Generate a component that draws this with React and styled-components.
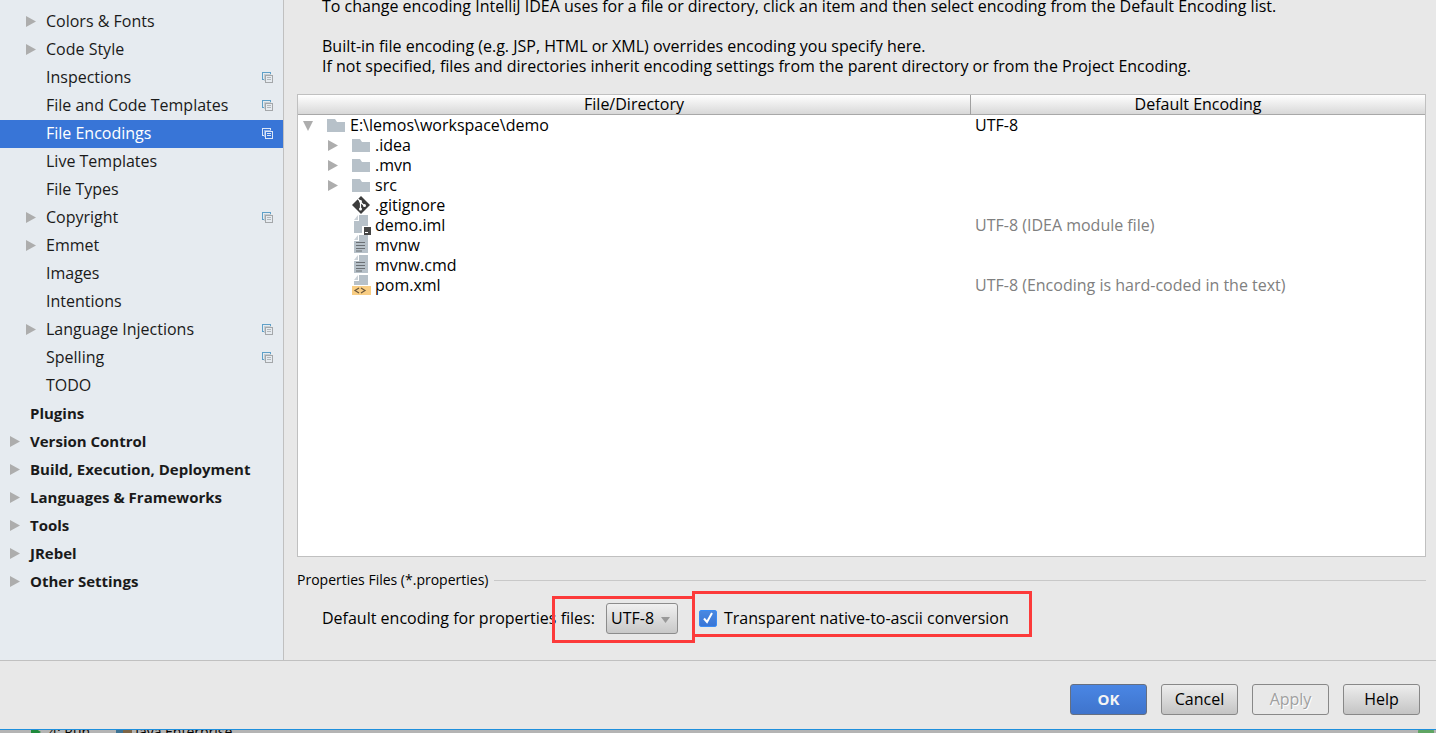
import React, { useState } from 'react';
import styled, { createGlobalStyle, css } from 'styled-components';

const GlobalStyle = createGlobalStyle`
  *, *::before, *::after { box-sizing: border-box; }
  body {
    margin: 0;
    background: #e8e8e8;
    color: #000;
    font-family: "Open Sans", "Noto Sans", sans-serif;
    font-size: 16px;
    line-height: 20px;
  }
`;

const Screen = styled.div`
  display: flex;
  flex-direction: column;
  height: 100vh;
  overflow: hidden;
`;

const Dialog = styled.div`
  display: flex;
  flex-direction: column;
  flex: 1;
  min-height: 0;
`;

const Panes = styled.div`
  display: flex;
  flex: 1;
  min-height: 0;
`;

const Sidebar = styled.nav`
  flex: none;
  width: 284px;
  padding-top: 8px;
  background: #e6ebf0;
  border-right: 1px solid #c0c0c0;
`;

const NavList = styled.ul`
  margin: 0;
  padding: 0;
  list-style: none;
`;

const NavLink = styled.a`
  display: flex;
  align-items: center;
  height: 28px;
  padding: 0 10px 2px;
  padding-left: ${(p) => (p.$top ? 10 : 26)}px;
  color: #1a1a1a;
  font-size: ${(p) => (p.$top ? 15 : 16)}px;
  font-weight: ${(p) => (p.$top ? 700 : 400)};
  text-decoration: none;
  ${(p) => p.$selected && css`
    background: #3875d7;
    color: #fff;
  `}
`;

const NavLabel = styled.span`
  flex: 1;
  white-space: nowrap;
`;

const ArrowSlot = styled.span`
  display: flex;
  flex: none;
  align-items: center;
  width: ${(p) => p.$width}px;
`;

const Content = styled.main`
  display: flex;
  flex: 1;
  flex-direction: column;
  min-width: 0;
  padding: 0 10px 0 13px;
`;

const Intro = styled.div`
  display: flex;
  flex: none;
  flex-direction: column;
  justify-content: flex-end;
  gap: 20px;
  height: 94px;
  padding: 0 0 18px 25px;
`;

const Paragraph = styled.p`
  margin: 0;
  white-space: nowrap;
`;

const TablePane = styled.div`
  flex: 1;
  min-height: 0;
  background: #fff;
  border: 1px solid #c0c0c0;
`;

const FileTable = styled.table`
  width: 100%;
  table-layout: fixed;
  border-spacing: 0;
`;

const HeadCell = styled.th`
  width: ${(p) => p.$width || 'auto'};
  height: 20px;
  padding: 0;
  background: linear-gradient(#fff, #d8d8d8);
  border-bottom: 1px solid #a8a8a8;
  font-weight: 400;
  line-height: 19px;
  & + & { border-left: 1px solid #a0a0a0; }
`;

const Cell = styled.td`
  height: 20px;
  padding: 0 0 0 5px;
  color: ${(p) => (p.$muted ? '#808080' : '#000')};
  white-space: nowrap;
`;

const TreeItem = styled.div`
  display: flex;
  align-items: center;
  height: 20px;
  padding-left: ${(p) => p.$depth * 25}px;
`;

const TreeIcon = styled.span`
  display: flex;
  flex: none;
  width: 23px;
`;

const GroupTitle = styled.h2`
  display: flex;
  align-items: center;
  gap: 6px;
  margin: 13px 0 0;
  font-size: 14px;
  font-weight: 400;
  &::after {
    content: "";
    flex: 1;
    height: 1px;
    background: #c8c8c8;
  }
`;

const Options = styled.div`
  display: flex;
  align-items: center;
  height: 70px;
  padding: 0 0 14px 25px;
`;

const Marked = styled.div`
  position: relative;
  display: flex;
  align-items: center;
  ${(p) => p.$fixed && css`width: 377px; justify-content: space-between;`}
`;

const Marker = styled.span`
  position: absolute;
  top: ${(p) => p.$top}px;
  left: ${(p) => p.$left}px;
  width: ${(p) => p.$width}px;
  height: ${(p) => p.$height}px;
  border: 3px solid #fc3a3a;
  pointer-events: none;
`;

const SelectBox = styled.span`
  position: relative;
  display: flex;
  margin-right: 21px;
  svg {
    position: absolute;
    top: 14px;
    right: 8px;
    pointer-events: none;
  }
`;

const Select = styled.select`
  appearance: none;
  width: 72px;
  height: 31px;
  padding: 0 4px;
  background: linear-gradient(#f0f0f0, #c8c8c8);
  border: 1px solid #8c8c8c;
  border-radius: 3px;
  color: #000;
  font: inherit;
`;

const CheckLabel = styled.label`
  display: flex;
  align-items: center;
  gap: 7px;
  white-space: nowrap;
`;

const Checkbox = styled.input`
  appearance: none;
  width: 18px;
  height: 17px;
  margin: 0;
  background: linear-gradient(#4a88e0, #3875d7);
  border: 1px solid #3b8cf5;
  border-radius: 2px;
  & + svg { margin-left: -25px; pointer-events: none; }
  &:not(:checked) { background: #fff; }
  &:not(:checked) + svg { visibility: hidden; }
`;

const Footer = styled.footer`
  display: flex;
  flex: none;
  justify-content: flex-end;
  gap: 14px;
  padding: 23px 16px 14px;
  border-top: 1px solid #c0c0c0;
`;

const Button = styled.button`
  width: 77px;
  height: 31px;
  padding: 0 0 2px;
  background: linear-gradient(#ededed, #c4c4c4);
  border: 1px solid #888;
  border-radius: 3px;
  color: #000;
  font: inherit;
  ${(p) => p.$primary && css`
    background: linear-gradient(#4a86e4, #3f74cc);
    border-color: #666f80;
    color: #f4f4f4;
    font-size: 15px;
    font-weight: 700;
  `}
  &:disabled {
    background: #e8e8e8;
    color: #a0a0a0;
    text-shadow: 1px 1px #fff;
  }
`;

const ToolStrip = styled.div`
  display: flex;
  flex: none;
  align-items: center;
  gap: 26px;
  height: 4px;
  padding: 0 2px 0 31px;
  overflow: hidden;
  background: #b4b4b4;
  border-top: 1px solid #1e8fdc;
  font-size: 14px;
  line-height: 24px;
`;

const StripItem = styled.span`
  display: flex;
  flex: none;
  align-items: center;
  gap: ${(p) => p.$gap}px;
  &:last-child { margin-left: auto; }
`;

const Arrow = ({ open }) => (
  <svg width="11" height="11" viewBox="0 0 11 11" aria-hidden="true">
    <path d={open ? 'M0 1h10L5 11z' : 'M0 0v11L10 5.5z'} fill="#adadad" />
  </svg>
);

const CopyIcon = ({ selected }) => (
  <svg width="11" height="11" viewBox="0 0 11 11" fill="none" aria-hidden="true" shapeRendering="crispEdges">
    <path d="M2 7.500H.5v-7h8V2" stroke={selected ? '#dce7f7' : '#5fa0c8'} />
    <path d="M2.500 9V2.500H9" stroke={selected ? '#8fb2e9' : '#c2cdd4'} />
    <rect x="3.500" y="3.500" width="7" height="7" stroke={selected ? '#dce7f7' : '#a4a7aa'} />
    <path d="M5 5.500h4M5 7.500h4" stroke={selected ? '#dce7f7' : '#b2b7bb'} />
  </svg>
);

const PageShape = () => (
  <>
    <path d="M7 0h9v18H2V6h5z" fill="#b7c1c9" />
    <path d="M6 0v5H2z" fill="#cbd2d8" />
  </>
);

const icons = {
  folder: <path d="M0 4h8l2 3h8v10H0z" fill="#b7c1c9" />,
  git: (
    <>
      <path d="M9 1l9 9-9 9-9-9z" fill="#3c3c3c" />
      <path d="M6 4l2.500 2.500V14M8.500 7l4 4" stroke="#fff" strokeWidth="1.200" fill="none" />
      <circle cx="8.500" cy="6.500" r="1.400" fill="#fff" />
      <circle cx="8.500" cy="14" r="1.500" fill="#fff" />
      <circle cx="12.500" cy="10.500" r="1.500" fill="#fff" />
    </>
  ),
  module: (
    <>
      <PageShape />
      <path d="M10 11h9v9h-9z" fill="#fff" />
      <path d="M12 12h7v8h-7z" fill="#464646" />
      <path d="M13 17h3v1h-3z" fill="#fff" />
    </>
  ),
  text: (
    <>
      <PageShape />
      <path d="M4 7.500h9M4 10.500h9M4 13.500h9M4 16h6" stroke="#6b7075" strokeWidth="1" />
    </>
  ),
  xml: (
    <>
      <path d="M7 0h9v10H2V6h5z" fill="#b7c1c9" />
      <path d="M6 0v5H2z" fill="#cbd2d8" />
      <path d="M0 11h19v9H0z" fill="#f8cd83" />
      <path d="M7 13l-4 2.500L7 18M9 13l4 2.500-4 2.500" stroke="#6b573b" strokeWidth="1.200" fill="none" />
    </>
  ),
};

const FileIcon = ({ kind }) => (
  <svg width="19" height="20" viewBox="0 0 19 20" aria-hidden="true">{icons[kind]}</svg>
);

const settings = [
  { label: 'Colors & Fonts', arrow: true },
  { label: 'Code Style', arrow: true },
  { label: 'Inspections', copy: true },
  { label: 'File and Code Templates', copy: true },
  { label: 'File Encodings', copy: true, selected: true },
  { label: 'Live Templates' },
  { label: 'File Types' },
  { label: 'Copyright', arrow: true, copy: true },
  { label: 'Emmet', arrow: true },
  { label: 'Images' },
  { label: 'Intentions' },
  { label: 'Language Injections', arrow: true, copy: true },
  { label: 'Spelling', copy: true },
  { label: 'TODO' },
  { label: 'Plugins', top: true },
  { label: 'Version Control', top: true, arrow: true },
  { label: 'Build, Execution, Deployment', top: true, arrow: true },
  { label: 'Languages & Frameworks', top: true, arrow: true },
  { label: 'Tools', top: true, arrow: true },
  { label: 'JRebel', top: true, arrow: true },
  { label: 'Other Settings', top: true, arrow: true },
];

const files = [
  { name: 'E:\\lemos\\workspace\\demo', kind: 'folder', depth: 0, arrow: true, open: true, encoding: 'UTF-8' },
  { name: '.idea', kind: 'folder', depth: 1, arrow: true },
  { name: '.mvn', kind: 'folder', depth: 1, arrow: true },
  { name: 'src', kind: 'folder', depth: 1, arrow: true },
  { name: '.gitignore', kind: 'git', depth: 1 },
  { name: 'demo.iml', kind: 'module', depth: 1, encoding: 'UTF-8 (IDEA module file)', muted: true },
  { name: 'mvnw', kind: 'text', depth: 1 },
  { name: 'mvnw.cmd', kind: 'text', depth: 1 },
  { name: 'pom.xml', kind: 'xml', depth: 1, encoding: 'UTF-8 (Encoding is hard-coded in the text)', muted: true },
];

export default function App() {
  const [transparent, setTransparent] = useState(true);
  return (
    <Screen>
      <GlobalStyle />
      <Dialog role="dialog" aria-label="Settings">
        <Panes>
          <Sidebar>
            <NavList>
              {settings.map((s) => (
                <li key={s.label}>
                  <NavLink href="#" $top={s.top} $selected={s.selected} aria-current={s.selected ? 'page' : undefined}>
                    <ArrowSlot $width={20}>{s.arrow && <Arrow />}</ArrowSlot>
                    <NavLabel>{s.label}</NavLabel>
                    {s.copy && <CopyIcon selected={s.selected} />}
                  </NavLink>
                </li>
              ))}
            </NavList>
          </Sidebar>
          <Content>
            <Intro>
              <Paragraph>
                To change encoding IntelliJ IDEA uses for a file or directory, click an item and then select encoding from the Default Encoding list.
              </Paragraph>
              <Paragraph>
                Built-in file encoding (e.g. JSP, HTML or XML) overrides encoding you specify here.
                <br />
                If not specified, files and directories inherit encoding settings from the parent directory or from the Project Encoding.
              </Paragraph>
            </Intro>
            <TablePane>
              <FileTable>
                <thead>
                  <tr>
                    <HeadCell>File/Directory</HeadCell>
                    <HeadCell $width="455px">Default Encoding</HeadCell>
                  </tr>
                </thead>
                <tbody>
                  {files.map((f) => (
                    <tr key={f.name}>
                      <Cell>
                        <TreeItem $depth={f.depth}>
                          <ArrowSlot $width={24}>{f.arrow && <Arrow open={f.open} />}</ArrowSlot>
                          <TreeIcon><FileIcon kind={f.kind} /></TreeIcon>
                          {f.name}
                        </TreeItem>
                      </Cell>
                      <Cell $muted={f.muted}>{f.encoding}</Cell>
                    </tr>
                  ))}
                </tbody>
              </FileTable>
            </TablePane>
            <GroupTitle>Properties Files (*.properties)</GroupTitle>
            <Options>
              <Marked $fixed>
                <label htmlFor="encoding">Default encoding for properties files:</label>
                <SelectBox>
                  <Select id="encoding" defaultValue="UTF-8">
                    <option>UTF-8</option>
                  </Select>
                  <svg width="9" height="6" viewBox="0 0 9 6" aria-hidden="true">
                    <path d="M0 0h9L4.500 6z" fill="#999" />
                  </svg>
                </SelectBox>
                <Marker $top={-7} $left={230} $width={143} $height={47} />
              </Marked>
              <Marked>
                <CheckLabel>
                  <Checkbox type="checkbox" checked={transparent} onChange={(e) => setTransparent(e.target.checked)} />
                  <svg width="18" height="18" viewBox="0 0 18 18" aria-hidden="true">
                    <path d="M5 9.500l3 3.500 5-9" stroke="#fff" strokeWidth="2" fill="none" />
                  </svg>
                  Transparent native-to-ascii conversion
                </CheckLabel>
                <Marker $top={-17} $left={-7} $width={340} $height={46} />
              </Marked>
            </Options>
          </Content>
        </Panes>
        <Footer>
          <Button $primary>OK</Button>
          <Button>Cancel</Button>
          <Button disabled>Apply</Button>
          <Button>Help</Button>
        </Footer>
      </Dialog>
      <ToolStrip>
        <StripItem $gap={8}>
          <svg width="10" height="12" viewBox="0 0 10 12" aria-hidden="true">
            <path d="M0 0l10 6-10 6z" fill="#1f8a3c" />
          </svg>
          4: Run
        </StripItem>
        <StripItem $gap={3}>
          <svg width="16" height="12" viewBox="0 0 16 12" aria-hidden="true">
            <path d="M0 0h7v12H0z" fill="#3d7395" />
            <path d="M7 0h9v12H7z" fill="#7d6546" />
          </svg>
          Java Enterprise
        </StripItem>
        <StripItem>
          <svg width="16" height="16" viewBox="0 0 16 16" aria-hidden="true">
            <circle cx="8" cy="8" r="8" fill="#5fa563" />
          </svg>
        </StripItem>
      </ToolStrip>
    </Screen>
  );
}
